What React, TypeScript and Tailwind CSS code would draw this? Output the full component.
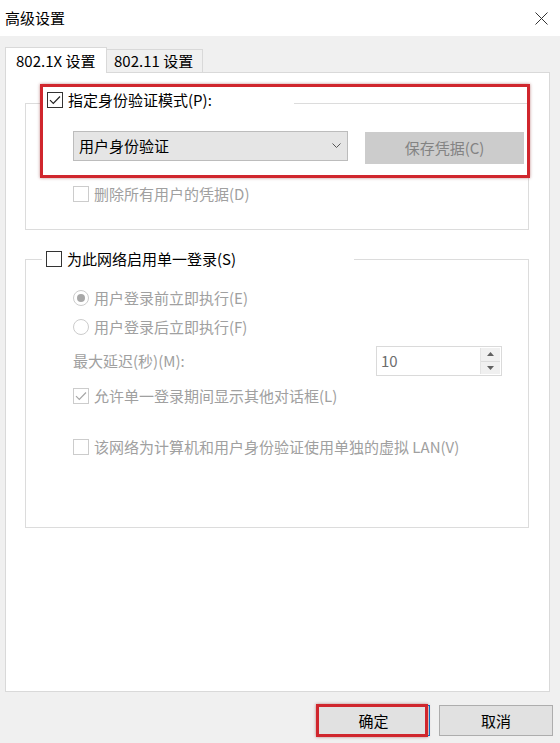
import clsx from "clsx";

type BoxProps = { checked?: boolean; disabled?: boolean };

function CheckBox({ checked, disabled }: BoxProps) {
  return (
    <span
      className={clsx(
        "flex h-4 w-4 shrink-0 items-center justify-center border bg-white",
        disabled ? "border-[#cccccc]" : "border-[#333333]"
      )}
    >
      {checked && (
        <svg width="12" height="10" viewBox="0 0 12 10">
          <path
            d="M1 5.2 L4.3 8.5 L11 1.5"
            fill="none"
            stroke={disabled ? "#a6a6a6" : "#222222"}
            strokeWidth="1.2"
          />
        </svg>
      )}
    </span>
  );
}

function Radio({ checked }: { checked?: boolean }) {
  return (
    <span className="flex h-4 w-4 shrink-0 items-center justify-center rounded-full border border-[#cccccc] bg-white">
      {checked && <span className="h-2 w-2 rounded-full bg-[#a8a8a8]" />}
    </span>
  );
}

function Row({
  children,
  text,
  disabled,
  className,
}: {
  children: React.ReactNode;
  text: string;
  disabled?: boolean;
  className?: string;
}) {
  return (
    <div className={clsx("flex h-5 items-center gap-[5px]", className)}>
      {children}
      <span className={disabled ? "text-[#a0a0a0]" : "text-black"}>{text}</span>
    </div>
  );
}

export default function App() {
  return (
    <div className="flex h-[743px] w-[560px] flex-col overflow-hidden bg-[#f0f0f0] font-['Noto_Sans_CJK_SC',sans-serif] text-[15px] leading-5 text-black">
      {/* title bar */}
      <div className="flex h-[36px] items-center justify-between bg-white pl-[5px] pr-[12px]">
        <span className="text-[15px]">高级设置</span>
        <svg width="13" height="13" viewBox="0 0 13 13">
          <path d="M0.5 0.5 L12.5 12.5 M12.5 0.5 L0.5 12.5" stroke="#333333" strokeWidth="1" fill="none" />
        </svg>
      </div>

      {/* tabs */}
      <div className="mx-[5px] mt-[11px] flex h-[25px] items-end">
        <div className="relative z-10 -mb-px flex h-[26px] w-[102px] items-center border-x border-t border-[#d9d9d9] bg-white pl-[10px]">
          802.1X 设置
        </div>
        <div className="flex h-[23px] w-[96px] items-center border-r border-t border-[#d9d9d9] bg-[#f0f0f0] pl-[7px]">
          802.11 设置
        </div>
      </div>

      {/* panel */}
      <div className="relative mx-[5px] h-[620px] w-[545px] border border-[#d9d9d9] bg-white">
        <fieldset className="ml-[19px] mt-[17px] w-[504px] border border-[#dcdcdc]">
          <legend className="ml-[15px] w-[253px] pb-[6px] pl-[6px]">
            <Row text="指定身份验证模式(P):">
              <CheckBox checked />
            </Row>
          </legend>
          <div className="mt-[15px] flex items-start gap-[17px] pl-[47px]">
            <div className="flex h-[30px] w-[275px] items-center justify-between border border-[#bcbcbc] bg-[#e5e5e5] pl-[5px] pr-[6px]">
              <span>用户身份验证</span>
              <svg width="9" height="6" viewBox="0 0 9 6">
                <path d="M0.5 0.5 L4.5 4.5 L8.5 0.5" stroke="#555555" strokeWidth="1" fill="none" />
              </svg>
            </div>
            <div className="mt-px flex h-[32px] w-[159px] items-center justify-center bg-[#cccccc] text-[#838383]">
              保存凭据(C)
            </div>
          </div>
          <Row text="删除所有用户的凭据(D)" disabled className="mt-[20px] mb-[25px] pl-[47px]">
            <CheckBox disabled />
          </Row>
        </fieldset>

        <fieldset className="ml-[19px] mt-[19px] w-[504px] border border-[#dcdcdc]">
          <legend className="ml-[16px] w-[312px] pl-[4px]">
            <Row text="为此网络启用单一登录(S)">
              <CheckBox />
            </Row>
          </legend>
          <div className="flex flex-col pb-[70px] pl-[47px]">
            <Row text="用户登录前立即执行(E)" disabled className="mt-[19px]">
              <Radio checked />
            </Row>
            <Row text="用户登录后立即执行(F)" disabled className="mt-[9px]">
              <Radio />
            </Row>
            <div className="mt-[9px] flex h-[30px] items-center">
              <span className="w-[303px] text-[#a0a0a0]">最大延迟(秒)(M):</span>
              <div className="flex h-[30px] w-[126px] border border-[#dadada] bg-white">
                <span className="flex flex-1 items-center pl-[4px] text-[#6d6d6d]">10</span>
                <div className="my-px mr-px flex w-[20px] flex-col border-l border-[#e3e3e3] bg-[#f0f0f0]">
                  <div className="flex flex-1 items-center justify-center border-b border-[#dcdcdc]">
                    <svg width="7" height="4" viewBox="0 0 7 4">
                      <path d="M0 4 L3.5 0 L7 4 Z" fill="#606060" />
                    </svg>
                  </div>
                  <div className="flex flex-1 items-center justify-center">
                    <svg width="7" height="4" viewBox="0 0 7 4">
                      <path d="M0 0 L7 0 L3.5 4 Z" fill="#606060" />
                    </svg>
                  </div>
                </div>
              </div>
            </div>
            <Row text="允许单一登录期间显示其他对话框(L)" disabled className="mt-[10px]">
              <CheckBox checked disabled />
            </Row>
            <Row text="该网络为计算机和用户身份验证使用单独的虚拟 LAN(V)" disabled className="mt-[31px]">
              <CheckBox disabled />
            </Row>
          </div>
        </fieldset>

        {/* red annotation */}
        <div className="absolute left-[34px] top-[11px] h-[94px] w-[490px] border-[3px] border-[#d0262d] shadow-[0_0_3px_rgba(120,0,0,0.45)]" />
      </div>

      {/* buttons */}
      <div className="mt-[13px] flex justify-end gap-[9px] pr-[7px]">
        <div className="relative flex h-[31px] w-[113px] items-center justify-center border border-[#0078d7] bg-[#e1e1e1]">
          确定
          <div className="absolute -left-[2px] -top-[2px] h-[33px] w-[112px] border-[3px] border-[#d0262d] shadow-[0_0_3px_rgba(120,0,0,0.45)]" />
        </div>
        <div className="flex h-[31px] w-[114px] items-center justify-center border border-[#adadad] bg-[#e1e1e1]">
          取消
        </div>
      </div>
    </div>
  );
}
